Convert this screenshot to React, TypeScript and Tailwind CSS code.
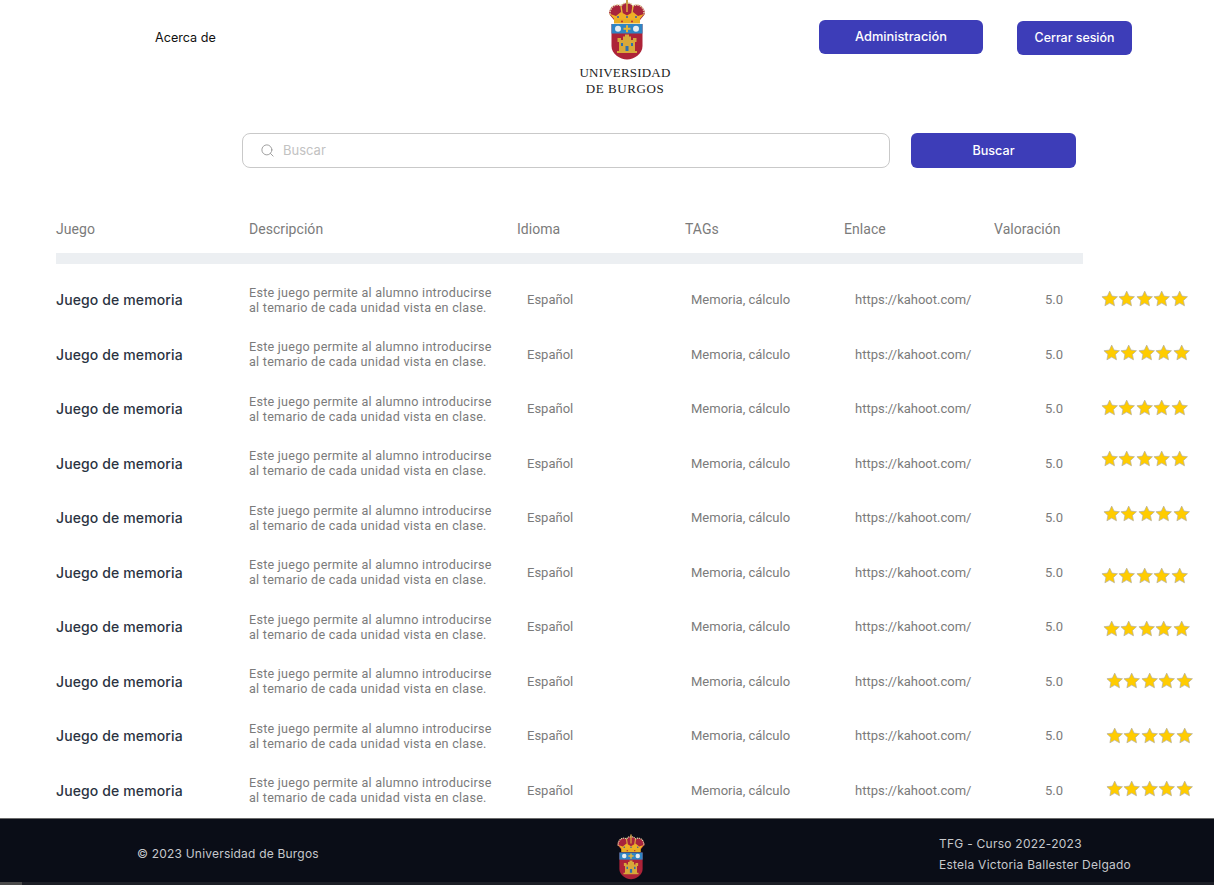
import { Search } from 'lucide-react';

const rows = [
  { stars: 'ml-[19px] -mt-[2px]' },
  { stars: 'ml-[21px] -mt-[4px]' },
  { stars: 'ml-[19px] -mt-[2px]' },
  { stars: 'ml-[19px] -mt-[10px]' },
  { stars: 'ml-[21px] -mt-[8px]' },
  { stars: 'ml-[19px] mt-[6px]' },
  { stars: 'ml-[21px] mt-[3px]' },
  { stars: 'ml-[24px] -mt-[1px]' },
  { stars: 'ml-[24px] -mt-[1px]' },
  { stars: 'ml-[24px] -mt-[4px]' },
];

function Crest({ className }: { className: string }) {
  return (
    <svg viewBox="0 0 40 60" className={className}>
      <path d="M2 14 C2 6 10 3 14 6 C16 3 18 3 20 3 C22 3 24 3 26 6 C30 3 38 6 38 14 L33 20 H7 Z" fill="#a8243c" />
      <path d="M3 15 C2 6 10 3 14 6 C16 3 18 3 20 3 C22 3 24 3 26 6 C30 3 38 6 37 15" fill="none" stroke="#e6d6a8" strokeWidth="1.6" strokeDasharray="1.6 1" />
      <path d="M14 6 L15 13 M26 6 L25 13 M20 3 V12" stroke="#e3b53a" strokeWidth="1.4" />
      <path d="M19 0h2v4h-2z" fill="#c9a24a" />
      <path d="M3 14 L8 20 H32 L37 14 L31 16 L26 12 L20 15.5 L14 12 L9 16 Z" fill="#eeb026" />
      <rect x="7" y="19" width="26" height="4.5" fill="#e9ad24" />
      <circle cx="11" cy="17" r="1" fill="#2f5fa8" />
      <circle cx="20" cy="17" r="1" fill="#2f5fa8" />
      <circle cx="29" cy="17" r="1" fill="#2f5fa8" />
      <circle cx="15" cy="21.5" r="0.9" fill="#b11f3a" />
      <circle cx="25" cy="21.5" r="0.9" fill="#b11f3a" />
      <path d="M4.5 24 H35.5 V46 C35.5 54 27 59.5 20 59.5 C13 59.5 4.5 54 4.5 46 Z" fill="#ad2338" />
      <rect x="4.5" y="24" width="31" height="9.5" fill="#2f85c4" />
      <circle cx="11" cy="28.8" r="3" fill="#e6edf2" />
      <circle cx="29" cy="28.8" r="3" fill="#e6edf2" />
      <path d="M19 25.3h2v2.5h2.5v2H21v2.5h-2v-2.5h-2.5v-2H19z" fill="#e3b53a" />
      <path d="M12 51 V42 H10.5 V38 H14 V40 H16 V36.5 H18 V34.5 H22 V36.5 H24 V40 H26 V38 H29.5 V42 H28 V51 H30 V53 H10 V51 Z" fill="#d8a83a" />
      <rect x="18.5" y="46" width="3" height="5" fill="#2f6fae" />
      <rect x="14" y="43" width="2" height="3" fill="#2f6fae" />
      <rect x="24" y="43" width="2" height="3" fill="#2f6fae" />
    </svg>
  );
}

function Star() {
  return (
    <svg viewBox="0 0 24 24" className="w-[17.4px] h-[17.4px] shrink-0">
      <path d="M12 1.5l3.2 6.9 7.5.9-5.5 5.1 1.4 7.4L12 18.1l-6.6 3.7 1.4-7.4L1.3 9.3l7.5-.9z" fill="#ffcc00" stroke="#b5b0a0" strokeWidth="1" strokeLinejoin="round" />
    </svg>
  );
}

function Stars({ className }: { className: string }) {
  return (
    <div className={`flex ${className}`}>
      <Star />
      <Star />
      <Star />
      <Star />
      <Star />
    </div>
  );
}

function GameRow({ stars }: { stars: string }) {
  return (
    <div className="flex items-center h-[54.5px] text-[13px] text-[#7b7b7b]">
      <div className="w-[193px] shrink-0 text-[14px] font-medium text-[#2b3342] font-['Inter',sans-serif] tracking-[0.12px]">Juego de memoria</div>
      <div className="w-[278px] shrink-0 leading-[15px] text-[12.6px] tracking-[0.25px]">
        Este juego permite al alumno introducirse
        <br />
        al temario de cada unidad vista en clase.
      </div>
      <div className="w-[164px] shrink-0">Español</div>
      <div className="w-[164px] shrink-0">Memoria, cálculo</div>
      <div className="w-[190px] shrink-0">https://kahoot.com/</div>
      <div className="w-[37px] shrink-0">5.0</div>
      <Stars className={stars} />
    </div>
  );
}

export default function App() {
  return (
    <div className="w-[1214px] h-[885px] overflow-hidden bg-white flex flex-col font-['Roboto',sans-serif]">
      <header className="h-[105px] shrink-0 flex items-start">
        <div className="w-[579px] shrink-0 pl-[155px] pt-[30px] text-[12.6px] leading-4 font-['Inter',sans-serif] text-[#111]">Acerca de</div>
        <div className="w-[240px] shrink-0">
          <Crest className="w-[40px] h-[60px] ml-[28px]" />
          <div className="w-[92px] text-center font-['Liberation_Serif',serif] text-[13px] leading-[16px] text-[#222] mt-[5px] tracking-[0.2px]">
            UNIVERSIDAD
            <br />
            <span className="tracking-[0.6px]">DE BURGOS</span>
          </div>
        </div>
        <button className="mt-[20px] w-[164px] h-[34px] rounded-md bg-[#3d3db8] text-white text-[12.8px] font-medium font-['Inter',sans-serif]">Administración</button>
        <button className="mt-[21px] ml-[34px] w-[115px] h-[34px] rounded-md bg-[#3d3db8] text-white text-[12.4px] font-medium font-['Inter',sans-serif] pt-[1px]">Cerrar sesión</button>
      </header>

      <div className="flex pl-[242px] pt-[28px] shrink-0">
        <div className="w-[648px] h-[35px] rounded-lg border border-[#c9c9c9] flex items-center pl-[17px] gap-[8px]">
          <Search className="w-[15px] h-[15px] text-[#9a9a9a]" strokeWidth={1.5} />
          <span className="text-[13px] text-[#c2c2c2] font-['Inter',sans-serif] pt-[1px]">Buscar</span>
        </div>
        <button className="ml-[21px] w-[165px] h-[35px] pt-[1px] rounded-md bg-[#3d3db8] text-white text-[12.6px] font-medium font-['Inter',sans-serif]">Buscar</button>
      </div>

      <div className="pl-[56px] pt-[53px] flex-1 min-h-0">
        <div className="flex h-[16px] items-center text-[14px] text-[#7b7b7b] tracking-[0.05px]">
          <div className="w-[193px]">Juego</div>
          <div className="w-[268px]">Descripción</div>
          <div className="w-[168px]">Idioma</div>
          <div className="w-[159px]">TAGs</div>
          <div className="w-[150px]">Enlace</div>
          <div>Valoración</div>
        </div>
        <div className="w-[1027px] h-[11px] bg-[#eceff2] mt-[16px] mb-[8.5px]" />
        {rows.map((r, i) => (
          <GameRow key={i} stars={r.stars} />
        ))}
      </div>

      <footer className="h-[67px] shrink-0 relative bg-[#0a0d17] border-t border-[#6b6b6b] flex text-[12px] text-[#c6c8cc] font-['Inter',sans-serif]">
        <div className="w-[616px] shrink-0 pl-[137px] pt-[27px] leading-4 tracking-[0.2px]">© 2023 Universidad de Burgos</div>
        <div className="w-[323px] shrink-0 pt-[14px]">
          <Crest className="w-[30px] h-[48px]" />
        </div>
        <div className="pt-[14px] leading-[21px] tracking-[0.25px]">
          TFG - Curso 2022-2023
          <br />
          Estela Victoria Ballester Delgado
        </div>
        <div className="absolute left-0 right-0 bottom-0 h-[3px] bg-[#1c1e26]">
          <div className="w-[22px] h-full bg-[#4a4a4a]" />
        </div>
      </footer>
    </div>
  );
}
